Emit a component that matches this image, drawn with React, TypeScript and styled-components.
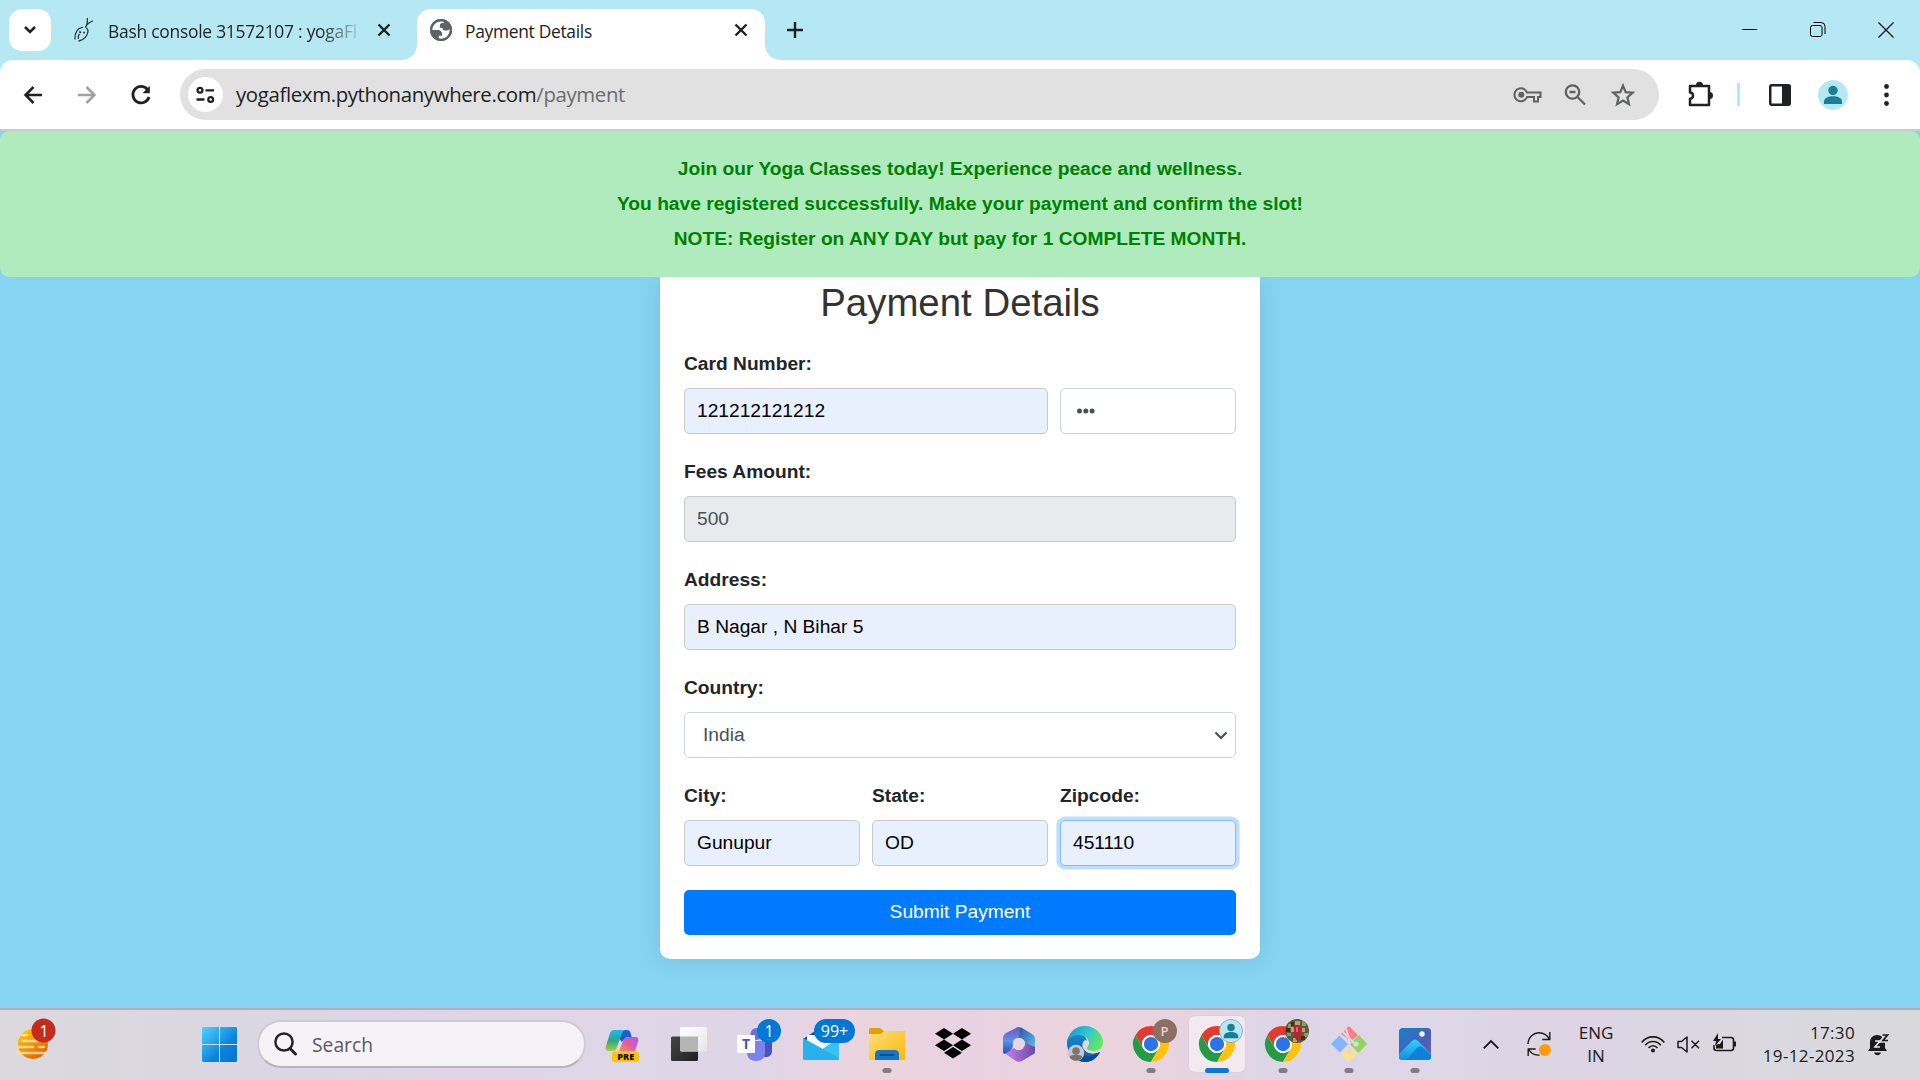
import React from "react";
import styled, { createGlobalStyle, css } from "styled-components";

const GlobalStyle = createGlobalStyle`
  * { box-sizing: border-box; }
  body { margin: 0; overflow: hidden; }
  svg { display: block; overflow: visible; flex: none; }
`;

const uiFont = `"Open Sans", "Noto Sans", sans-serif`;
const pageFont = `"Liberation Sans", Arial, sans-serif`;

const Screen = styled.div`
  width: 1920px;
  height: 1080px;
  display: flex;
  flex-direction: column;
  background: #b6e8f3;
  overflow: hidden;
`;

/* ---------- browser chrome ---------- */

const TabStrip = styled.header`
  height: 60px;
  display: flex;
  padding: 9px 0 0 9px;
  font-family: ${uiFont};
  color: #1f2123;
`;

const TabSearch = styled.button`
  width: 42px;
  height: 42px;
  border: 0;
  padding: 0;
  border-radius: 13px;
  background: #fff;
  display: grid;
  place-items: center;
`;

const Tab = styled.div<{ $active?: boolean }>`
  position: relative;
  height: 51px;
  display: flex;
  align-items: center;
  padding-bottom: 9px;
  ${(p) =>
    p.$active
      ? css`
          width: 348px;
          padding-left: 13px;
          padding-right: 18px;
          background: #fff;
          border-radius: 14px 14px 0 0;
          &::before,
          &::after {
            content: "";
            position: absolute;
            bottom: 0;
            width: 15px;
            height: 15px;
          }
          &::before {
            left: -15px;
            background: radial-gradient(circle at 0 0, transparent 14.5px, #fff 15.2px);
          }
          &::after {
            right: -15px;
            background: radial-gradient(circle at 100% 0, transparent 14.5px, #fff 15.2px);
          }
        `
      : css`
          width: 366px;
          padding-left: 23px;
          padding-right: 27px;
        `}
`;

const TabTitle = styled.span<{ $fade?: boolean; $left: number; $track: number }>`
  flex: 1;
  margin-left: ${(p) => p.$left}px;
  margin-right: 18px;
  overflow: hidden;
  white-space: nowrap;
  font-size: 17.4px;
  line-height: 26px;
  padding-top: 2px;
  letter-spacing: ${(p) => p.$track}px;
  ${(p) => p.$fade && `-webkit-mask-image: linear-gradient(90deg, #000 84%, rgba(0,0,0,.1)); mask-image: linear-gradient(90deg, #000 84%, rgba(0,0,0,.1));`}
`;

const NewTab = styled.div`
  width: 61px;
  padding: 13px 0 0 22px;
`;

const WindowButtons = styled.div`
  margin-left: auto;
  display: flex;
  gap: 52px;
  padding: 13px 26px 0 0;
`;

const Toolbar = styled.nav`
  height: 71px;
  background: #fff;
  border-bottom: 2px solid #cbcbcd;
  border-radius: 13px 13px 0 0;
  display: flex;
  align-items: center;
  padding: 0 18px 0 21px;
  font-family: ${uiFont};
`;

const NavButtons = styled.div`
  width: 159px;
  display: flex;
  gap: 30px;
`;

const Omnibox = styled.div`
  width: 1479px;
  height: 51px;
  border-radius: 26px;
  background: #e1e1e1;
  display: flex;
  align-items: center;
  padding: 0 23px 0 8px;
`;

const SiteInfo = styled.span`
  width: 35px;
  height: 35px;
  border-radius: 50%;
  background: #fff;
  display: grid;
  place-items: center;
`;

const Url = styled.span`
  flex: 1;
  margin: -2px 0 0 13px;
  font-size: 20.4px;
  line-height: 30px;
  letter-spacing: -0.36px;
  color: #202124;
  span { color: #6b6c6f; }
`;

const OmniActions = styled.div`
  display: flex;
  align-items: center;
  gap: 20px;
`;

const ToolbarActions = styled.div`
  margin-left: auto;
  display: flex;
  align-items: center;
  padding-right: 13px;
`;

const Divider = styled.i`
  width: 3px;
  height: 23px;
  margin: 0 29px 0 24px;
  background: #b6e8f3;
`;

const Avatar = styled.span`
  width: 30px;
  height: 30px;
  margin: 0 36px 0 27px;
`;

/* ---------- page ---------- */

const Page = styled.main`
  height: 877px;
  background: #86d4f2;
  font-family: ${pageFont};
  font-size: 19.2px;
  line-height: 28.8px;
  color: #212529;
  display: flex;
  flex-direction: column;
  align-items: center;
`;

const Banner = styled.div`
  position: relative;
  z-index: 1;
  width: 100%;
  height: 146px;
  padding-top: 20px;
  border-radius: 9px;
  background: #afebbc;
  color: #008000;
  font-weight: 700;
  text-align: center;
  line-height: 35px;
  p { margin: 0; }
`;

const Card = styled.form`
  width: 600px;
  height: 682px;
  padding: 3px 24px 24px;
  background: #fff;
  border-radius: 0 0 10px 10px;
  box-shadow: 0 0 24px rgba(0, 0, 0, 0.1);
  display: flex;
  flex-direction: column;
`;

const Title = styled.h2`
  margin: 0 0 23.6px;
  font-size: 38.4px;
  line-height: 46px;
  font-weight: 400;
  color: #333;
  text-align: center;
`;

const Row = styled.div<{ $columns: string }>`
  display: grid;
  grid-template-columns: ${(p) => p.$columns};
  column-gap: 12px;
  align-items: end;
  height: 84px;
  margin-bottom: 24px;
`;

const Field = styled.div`
  display: flex;
  flex-direction: column;
  gap: 9.6px;
`;

const Label = styled.label`
  font-weight: 700;
  height: 28.8px;
  line-height: 27.6px;
`;

const Control = styled.div<{ $kind?: "auto" | "plain" | "disabled"; $focus?: boolean; $pad?: number; $drop?: number }>`
  height: 45.6px;
  display: flex;
  align-items: center;
  justify-content: space-between;
  padding: ${(p) => p.$drop ?? 1.6}px 7px 0 ${(p) => p.$pad ?? 12}px;
  border-radius: 5px;
  border: 1px solid ${(p) => (p.$focus ? "#80bdff" : p.$kind === "plain" ? "#ced4da" : "#c8cacc")};
  background: ${(p) => (p.$kind === "plain" ? "#fff" : p.$kind === "disabled" ? "#e8ebed" : "#e8f0fe")};
  color: ${(p) => (p.$kind === "plain" || p.$kind === "disabled" ? "#495057" : "#000")};
  ${(p) => p.$focus && "box-shadow: 0 0 0 3.6px #bfdeff;"}
`;

const Submit = styled.button`
  height: 45.6px;
  border: 0;
  padding: 0;
  border-radius: 5px;
  background: #007bff;
  color: #fff;
  font: 400 19.2px/28.8px ${pageFont};
`;

/* ---------- taskbar ---------- */

const Taskbar = styled.footer`
  height: 72px;
  border-top: 2px solid #b3adb9;
  padding-bottom: 2px;
  display: flex;
  align-items: center;
  background: linear-gradient(90deg, #dbd9dd 0, #dad7e2 220px, #dfd5e6 440px, #ded6e6 760px, #e8d3e3 820px, #ead5dc 880px, #e8d1e2 970px, #ead5dc 1080px, #e7d3e0 1190px, #ded6e6 1260px, #ded7e6 1440px, #ddd4e4 1560px, #dad8e1 1760px, #d9d9db 1920px);
  font-family: ${uiFont};
  color: #1b1b1b;
`;

const Widget = styled.div`
  width: 202px;
  padding: 0 0 11px 15px;
`;

const SearchBox = styled.div`
  width: 329px;
  height: 48px;
  margin-left: 20px;
  margin-right: 4px;
  padding-left: 15px;
  border: 2px solid #cfcad8;
  border-bottom-color: #b6b2be;
  border-radius: 24px;
  background: #f5f3f8;
  display: flex;
  align-items: center;
  gap: 15px;
  font-size: 19.3px;
  letter-spacing: 0;
  color: #5b5a5e;
`;

const Apps = styled.div`
  display: flex;
`;

const AppSlot = styled.div<{ $active?: boolean }>`
  position: relative;
  width: 56px;
  height: 56px;
  margin: 0 5px;
  border-radius: 6px;
  display: grid;
  place-items: center;
  ${(p) => p.$active && "background: #f2e9f1; box-shadow: 0 0 0 1px #ddd0dd;"}
`;

const RunMark = styled.i<{ $active?: boolean }>`
  position: absolute;
  bottom: -1px;
  left: 50%;
  transform: translateX(-50%);
  width: ${(p) => (p.$active ? 24 : 9)}px;
  height: 5px;
  border-radius: 3px;
  background: ${(p) => (p.$active ? "#0b78d4" : "#837b84")};
`;

const Count = styled.span<{ $left: number; $width: number }>`
  position: absolute;
  top: 3px;
  left: ${(p) => p.$left}px;
  width: ${(p) => p.$width}px;
  height: 24px;
  border-radius: 12px;
  background: #0078d4;
  color: #fff;
  font-size: 16px;
  line-height: 24px;
  text-align: center;
`;

const ProfileBadge = styled.span`
  position: absolute;
  top: 3px;
  left: 30px;
  width: 24px;
  height: 24px;
`;

const Tray = styled.div`
  margin-left: auto;
  height: 100%;
  display: flex;
  align-items: center;
  padding-right: 30px;
`;

const TrayItem = styled.div<{ $gap: number; $lift?: number }>`
  margin-right: ${(p) => p.$gap}px;
  padding-bottom: ${(p) => p.$lift ?? 0}px;
`;

const Stack = styled.div<{ $align: string; $width: number; $gap: number; $size: number; $track?: number }>`
  width: ${(p) => p.$width}px;
  margin-right: ${(p) => p.$gap}px;
  font-size: ${(p) => p.$size}px;
  line-height: 23.5px;
  letter-spacing: ${(p) => p.$track ?? 0}px;
  text-align: ${(p) => p.$align};
  white-space: nowrap;
`;

/* ---------- drawings ---------- */

const Cross = ({ size = 12, w = 2.4 }: { size?: number; w?: number }) => (
  <svg width={size} height={size} viewBox="0 0 12 12" stroke="#1f2123" strokeWidth={w} fill="none">
    <path d="M.5.5l11 11M11.5.5l-11 11" />
  </svg>
);

const SnakeIcon = () => (
  <svg width="20" height="24" viewBox="0 0 20 24" fill="none" stroke="#27383c" strokeWidth="1.3" strokeLinecap="round">
    <path d="M1 21C.8 14.500 3.500 10 8.500 9.300" />
    <path d="M5 23c4.500-.8 8.500-5 9-9.500.1-1.500-.4-2.800-1.500-3.500M11.500 9c2-2 2-5 1.800-8.500M12.500 7.500c1.500-2.500 3.500-3.300 6-4.500" />
    <path d="M4.300 20.500c-.2-1.800 0-3.200.9-4.200" />
    <path d="M6 14l.3.3M10 14.300l.1.400" strokeWidth="1.800" />
  </svg>
);

const Globe = () => (
  <svg width="22" height="22" viewBox="2 2 20 20">
    <path fill="#5f6368" d="M12 2C6.480 2 2 6.480 2 12s4.480 10 10 10 10-4.480 10-10S17.520 2 12 2z" />
    <path fill="#fff" d="M4 12h4.400c3.400.02 4.940 1.730 4.600 5.130H10v2.600c3.500 1 7-.2 9-3.600 1-2 1.200-3.500.9-5.300C19.300 12 18 12.500 16.500 12.500c-1.900 0-3-.7-3.300-2.300L11 10V7.800c0-1.200.7-2 2-2.100h1.700l-.3-1.500C9.500 3.100 4.300 6 4 12z" />
    <path fill="none" stroke="#5f6368" strokeWidth="2" d="M12 3a9 9 0 1 0 0 18 9 9 0 1 0 0-18z" />
  </svg>
);

const Person = ({ size, bg = "#b6e8f3", fg = "#187f98", ring }: { size: number; bg?: string; fg?: string; ring?: string }) => (
  <svg width={size} height={size} viewBox="0 0 30 30">
    <circle cx="15" cy="15" r="14.500" fill={bg} stroke={ring ?? bg} />
    <circle cx="15" cy="10.500" r="4.700" fill={fg} />
    <path fill={fg} d="M6 24v-2.500c0-4 5-5.300 9-5.300s9 1.300 9 5.300V24z" />
  </svg>
);

const ChromeLogo = () => (
  <svg width="36" height="36" viewBox="0 0 48 48">
    <circle cx="24" cy="24" r="24" fill="#fff" />
    <path fill="#e33b2e" d="M3.215 12A24 24 0 0 1 44.785 12H24A12 12 0 0 0 13.608 30z" />
    <path fill="#259b48" d="M3.215 12A24 24 0 0 0 24 48L34.392 30A12 12 0 0 1 13.608 30z" />
    <path fill="#fcc20f" d="M44.785 12A24 24 0 0 1 24 48L34.392 30A12 12 0 0 0 24 12z" />
    <circle cx="24" cy="24" r="12" fill="#fff" />
    <circle cx="24" cy="24" r="9.500" fill="#2b74e8" />
  </svg>
);

const WeatherIcon = () => (
  <svg width="41" height="41" viewBox="0 0 41 41">
    <defs>
      <linearGradient id="sun" x1="0" y1="0" x2=".7" y2="1">
        <stop offset="0" stopColor="#ffd500" />
        <stop offset=".5" stopColor="#f89a08" />
        <stop offset="1" stopColor="#e85a00" />
      </linearGradient>
    </defs>
    <circle cx="18" cy="26" r="15" fill="url(#sun)" />
    <path d="M7 17h5M7.500 23h16M1 29h17M24 29h5M1 35h30" stroke="#f3dfa3" strokeWidth="2.500" strokeLinecap="round" opacity=".9" />
    <circle cx="28.500" cy="12.500" r="12" fill="#c42b1c" />
    <text x="29" y="18.500" fill="#fff" fontFamily="Open Sans" fontSize="16" textAnchor="middle">1</text>
  </svg>
);

const WindowsLogo = () => (
  <svg width="35" height="35" viewBox="0 0 35 35">
    <defs>
      <linearGradient id="win" x1="0" y1="0" x2="35" y2="35" gradientUnits="userSpaceOnUse">
        <stop offset="0" stopColor="#4fd4ff" />
        <stop offset=".6" stopColor="#0c84dc" />
        <stop offset="1" stopColor="#0074d1" />
      </linearGradient>
    </defs>
    <path fill="url(#win)" d="M1 0h16v17H0V1zM18 0h16l1 1v16H18zM0 18h17v17H1l-1-1zM18 18h17v16l-1 1H18z" />
  </svg>
);

const CopilotIcon = () => (
  <svg width="36" height="36" viewBox="0 0 36 36">
    <defs>
      <linearGradient id="cpA" x1="0" y1="0" x2="0" y2="1">
        <stop offset="0" stopColor="#21b8ee" />
        <stop offset=".5" stopColor="#2fa58d" />
        <stop offset="1" stopColor="#b1c93c" />
      </linearGradient>
      <linearGradient id="cpB" x1="1" y1="0" x2="0" y2="1">
        <stop offset="0" stopColor="#a35cf0" />
        <stop offset=".5" stopColor="#e45aa4" />
        <stop offset="1" stopColor="#f79054" />
      </linearGradient>
    </defs>
    <path fill="#1561d6" d="M9 4h13c2 0 3 1 3.600 3l1 4h-5l-5 5z" />
    <path fill="url(#cpA)" d="M9 4h11c-2 1-3 3-4 6l-4 11c-1 3-2 4-5 4H4c-3 0-4-2-3-5L5 7c1-2 2-3 4-3z" />
    <path fill="url(#cpB)" d="M25 11h5c3 0 4 2 3 5l-3 9H14l4-10c1-3 3-4 7-4z" />
    <rect x="7" y="25.500" width="27" height="10.500" rx="2.500" fill="#ffc408" />
    <text x="20.700" y="34" textAnchor="middle" fontFamily="Open Sans" fontWeight="800" fontSize="9.200" fill="#1b1500">PRE</text>
  </svg>
);

const TaskViewIcon = () => (
  <svg width="36" height="36" viewBox="0 0 36 36">
    <defs>
      <linearGradient id="tvD" x1="0" y1="0" x2="1" y2="1"><stop stopColor="#454545" /><stop offset="1" stopColor="#202020" /></linearGradient>
      <linearGradient id="tvL" x1="0" y1="0" x2="1" y2="1"><stop stopColor="#fff" /><stop offset="1" stopColor="#e7e7e7" /></linearGradient>
    </defs>
    <rect x="0" y="10.500" width="27" height="24.500" rx="1.500" fill="url(#tvD)" />
    <rect x="9" y="1" width="27" height="24.500" rx="1.500" fill="url(#tvL)" />
    <path d="M9 10.500h18v15H10l-1-1z" fill="#b4b4b4" />
  </svg>
);

const TeamsIcon = () => (
  <svg width="36" height="36" viewBox="0 0 36 36">
    <circle cx="19.500" cy="8" r="6" fill="#6a70d8" />
    <path fill="#4a53bd" d="M25 15h10v10c0 4-3 6-6 6h-4z" />
    <path fill="#7b83eb" d="M10 15h18v12c0 5-4 8-9 8s-9-3-9-8z" />
    <rect x="0" y="9" width="18" height="18" rx="1" fill="#fff" />
    <text x="9" y="23" textAnchor="middle" fontFamily="Open Sans" fontWeight="700" fontSize="14" fill="#4b53bc">T</text>
  </svg>
);

const MailIcon = () => (
  <svg width="36" height="36" viewBox="0 0 36 36">
    <path fill="#0c59a4" d="M0 13L18 1l18 12-18 15z" />
    <path fill="#f4f6f8" d="M4 9h29v11l-15 9L4 18z" />
    <path fill="#1c9fe5" d="M36 12v22H4z" />
    <path fill="#37c3f1" d="M36 12v22L17 25z" />
    <path fill="#29b1ea" d="M0 12l36 20c0 2-1 2-2 2H1l-1-1z" />
  </svg>
);

const FolderIcon = () => (
  <svg width="36" height="36" viewBox="0 0 36 36">
    <defs><linearGradient id="fold" x1="0" y1="0" x2="1" y2="1"><stop stopColor="#ffdf79" /><stop offset="1" stopColor="#f8b90a" /></linearGradient></defs>
    <path fill="#e0a008" d="M0 3l1-1h10l4 3v5H0z" />
    <path fill="url(#fold)" d="M0 8h12l3-3h21v29H1l-1-1z" />
    <path fill="#1277cc" d="M6 34v-6c0-3 2-4 4-4h16c2 0 4 1 4 4v6z" />
    <path stroke="#0b4a8c" strokeWidth="2" strokeLinecap="round" d="M11.500 29h13" />
  </svg>
);

const DropboxIcon = () => (
  <svg width="36" height="36" viewBox="0 0 36 36">
    <path d="M9 2l9 5.800-9 5.700-9-5.700zM27 2l9 5.800-9 5.700-9-5.700zM9 13.500l9 5.700L9 25l-9-5.800zM27 13.500l9 5.700-9 5.800-9-5.800zM18 21l9 5.700-9 5.800-9-5.800z" fill="#000" />
  </svg>
);

const Office365Icon = () => (
  <svg width="34" height="36" viewBox="0 0 34 36">
    <defs>
      <linearGradient id="ofA" x1="0" y1="0" x2="0" y2="1"><stop stopColor="#7454c6" /><stop offset=".5" stopColor="#5a91eb" /><stop offset="1" stopColor="#1d56ae" /></linearGradient>
      <linearGradient id="ofB" x1="0" y1="0" x2="1" y2="1"><stop stopColor="#244aa4" /><stop offset="1" stopColor="#65cdf0" /></linearGradient>
      <linearGradient id="ofC" x1="0" y1="0" x2="1" y2="0"><stop stopColor="#c884ed" /><stop offset="1" stopColor="#6b4aa4" /></linearGradient>
    </defs>
    <path fill="url(#ofB)" d="M14 2c2-1 4-1 6 0l10 6c2 1 3 3 3 5v15L23 18c0-4-3-6-6-6z" />
    <path fill="url(#ofC)" d="M2 27l10-5c3 3 7 3 9-1l2-4 10 4v4c0 2-1 3-3 4l-10 6c-2 1-4 1-6 0z" />
    <path fill="url(#ofA)" d="M18 1l-1 11c-4 0-7 3-6 7 0 4-4 7-9 9-1-1-1-2-1-4V12c0-2 1-4 3-5l10-5z" />
    <circle cx="17" cy="18" r="6" fill="#e8d6e2" />
  </svg>
);

const EdgeIcon = () => (
  <svg width="36" height="36" viewBox="0 0 36 36">
    <defs>
      <linearGradient id="egA" x1="0" y1=".2" x2="1" y2=".6"><stop stopColor="#1595d8" /><stop offset=".5" stopColor="#30c5d1" /><stop offset="1" stopColor="#66eb57" /></linearGradient>
      <linearGradient id="egB" x1="0" y1="0" x2="0" y2="1"><stop stopColor="#168ace" /><stop offset="1" stopColor="#0f58a9" /></linearGradient>
    </defs>
    <path fill="url(#egB)" d="M0 17C0 10 5 7 10 8c6 0 10 3 10 8 0 3-2 4-2 6 0 5 6 7 15 4-3 6-8 10-15 10C8 36 0 28 0 17z" />
    <path fill="url(#egA)" d="M0 17C1 7 8 0 18 0s18 8 18 16c0 6-4 9-9 9-4 0-7-1-7-3 0-1 2-2 2-5 0-5-5-8-10-8C6 9 1 12 0 17z" />
    <path fill="#0f4b94" d="M12 20c0 8 6 11 12 10 4-1 7-3 9-4-3 6-8 10-15 10-6 0-10-8-6-16z" />
    <path fill="#ead5dc" d="M18 14c-3 3-3 6-2 8 3 6 12 7 17 3 1-1 0-2-1-1-5 2-13 1-13-2 0-1 2-2 2-5 0-2-2-3-3-3z" />
    <circle cx="9" cy="27" r="8.200" fill="#cac7c6" />
    <circle cx="9" cy="25" r="3.800" fill="#777473" />
    <path fill="#777473" d="M2.500 31c1-3 12-3 13 0-3 5-10 5-13 0z" />
  </svg>
);

const GitIcon = () => (
  <svg width="36" height="36" viewBox="0 0 36 36">
    <path fill="#ff817f" d="M18 0l8 8c1 1 0 2-1 3l-7 6-2-5-6-4z" />
    <path fill="#84b5fb" d="M8.500 9.500L17 18l-8 8.500L0 18z" />
    <path fill="#91d55c" d="M28 9l8 9-8.500 9L19 18z" />
    <path fill="#fde482" d="M18 20l8 7.500L18 36l-8.500-8.500z" />
    <path stroke="#dfd7e6" strokeWidth="2" fill="none" d="M11 5l14 14M18 12v15M18 12l-3-9" />
    <circle cx="25" cy="18" r="2.600" fill="#dfd7e6" />
    <circle cx="18" cy="25" r="2.800" fill="#dfd7e6" />
  </svg>
);

const PhotosIcon = () => (
  <svg width="32" height="32" viewBox="0 0 32 32">
    <defs>
      <linearGradient id="phA" x1="0" y1="0" x2="1" y2="1"><stop stopColor="#1481cf" /><stop offset=".6" stopColor="#4c60b5" /><stop offset="1" stopColor="#7c58ad" /></linearGradient>
      <linearGradient id="phB" x1=".5" y1="0" x2=".5" y2="1"><stop stopColor="#35d2fa" /><stop offset="1" stopColor="#128ee0" /></linearGradient>
      <clipPath id="phC"><rect width="32" height="32" rx="3.500" /></clipPath>
    </defs>
    <g clipPath="url(#phC)">
      <rect width="32" height="32" fill="url(#phA)" />
      <path fill="url(#phB)" d="M0 26l13-13c2-2 4-2 6 0l13 13v6H0z" />
      <path fill="#0a83dd" d="M7 32l11-12c2-2 4-2 5-1l9 8v5z" />
    </g>
    <circle cx="23" cy="6" r="2.700" fill="#f2f0f5" />
  </svg>
);

const LetterBadge = () => (
  <svg width="24" height="24" viewBox="0 0 24 24">
    <circle cx="12" cy="12" r="12" fill="#8c6f65" />
    <text x="11.500" y="16.500" textAnchor="middle" fontFamily="Open Sans" fontWeight="600" fontSize="13" fill="#e6d9d4">P</text>
  </svg>
);

const PhotoBadge = () => (
  <svg width="24" height="24" viewBox="0 0 24 24">
    <defs><clipPath id="pb"><circle cx="12" cy="12" r="12" /></clipPath></defs>
    <g clipPath="url(#pb)">
      <rect width="24" height="24" fill="#5c5b3c" />
      <path fill="#8a9a5c" d="M3 5h3v4H3zM17 2h4v5h-4zM19 14h5v4h-5zM2 14h4v3H2z" />
      <path fill="#c09a76" d="M10 2h5v5h-5zM6 8h3v5H6zM17 9h3v4h-3zM8 19h4v4H8z" />
      <path fill="#343422" d="M6 3h3v4H6zM16 17h4v4h-4zM1 9h4v4H1z" />
      <path fill="#b4262f" d="M9 6h6l2 9-2 6h-4l-2-6z" />
      <path fill="#d86a62" d="M11 8h2v5h-2z" />
    </g>
  </svg>
);

const arrow = { fill: "none", stroke: "#202124", strokeWidth: 2.5 } as const;

export default function App() {
  return (
    <Screen>
      <GlobalStyle />
      <TabStrip>
        <TabSearch>
          <svg width="12" height="8" viewBox="0 0 12 8" {...arrow} strokeWidth={2.6}><path d="M1 1l5 5 5-5" /></svg>
        </TabSearch>
        <Tab>
          <SnakeIcon />
          <TabTitle $left={14} $track={-0.24} $fade>Bash console 31572107 : yogaFl</TabTitle>
          <Cross />
        </Tab>
        <Tab $active>
          <Globe />
          <TabTitle $left={13} $track={-0.3}>Payment Details</TabTitle>
          <Cross />
        </Tab>
        <NewTab>
          <svg width="16" height="16" viewBox="0 0 16 16" {...arrow} strokeWidth={2.4}><path d="M8 0v16M0 8h16" /></svg>
        </NewTab>
        <WindowButtons>
          <svg width="16" height="16" viewBox="0 0 16 16" stroke="#000" fill="none"><path d="M0 7.500h15" /></svg>
          <svg width="16" height="16" viewBox="0 0 16 16" stroke="#000" fill="none"><rect x=".5" y="3.500" width="11.500" height="11" rx="2" /><path d="M3.500.5h7.500a4 4 0 0 1 4 4v7.500" /></svg>
          <svg width="16" height="16" viewBox="0 0 16 16" stroke="#000" fill="none" strokeWidth="1.100"><path d="M.5.5l15 15M15.500.5l-15 15" /></svg>
        </WindowButtons>
      </TabStrip>

      <Toolbar>
        <NavButtons>
          <svg width="24" height="24" viewBox="0 0 24 24" {...arrow}><path d="M21 12H4.500M12.500 4l-8 8 8 8" /></svg>
          <svg width="24" height="24" viewBox="0 0 24 24" {...arrow} stroke="#a1a1a2"><path d="M3 12h16.500M11.500 4l8 8-8 8" /></svg>
          <svg width="24" height="24" viewBox="0 0 24 24" {...arrow} strokeWidth={2.8}><path d="M18.500 6.500A8.200 8.200 0 1 0 20 14" /><path d="M20.800 3v7.300h-7.300z" fill="#202124" stroke="none" /></svg>
        </NavButtons>
        <Omnibox>
          <SiteInfo>
            <svg width="19" height="16" viewBox="0 0 19 16" {...arrow} strokeWidth={2.3}><circle cx="4" cy="3.300" r="2.400" /><path d="M9.500 3.300H18M.5 12.500h8" /><circle cx="14.700" cy="12.500" r="2.400" /></svg>
          </SiteInfo>
          <Url>yogaflexm.pythonanywhere.com<span>/payment</span></Url>
          <OmniActions>
            <svg width="28" height="18" viewBox="0 0 28 18" fill="none" stroke="#5f6163" strokeWidth="2"><path d="M13 6.500h13.500V11H24v4.500h-4V11h-7A6.500 6.500 0 1 1 13 6.500z" /><circle cx="7.300" cy="8.800" r="3" fill="#5f6163" stroke="none" /></svg>
            <svg width="28" height="24" viewBox="0 0 28 24" fill="none" stroke="#5f6163" strokeWidth="2.300"><circle cx="10.500" cy="9" r="6.700" /><path d="M15.500 14l7.500 7.500M7.500 9h6" /></svg>
            <svg width="26" height="24" viewBox="0 0 26 24" fill="none" stroke="#5f6163" strokeWidth="2.200"><path d="M13 2.600l2.700 6.500 7 .6-5.300 4.600 1.600 6.900-6-3.700-6 3.700 1.600-6.900-5.300-4.600 7-.6z" /></svg>
          </OmniActions>
        </Omnibox>
        <ToolbarActions>
          <svg width="26" height="26" viewBox="0 0 26 26" {...arrow}><path d="M3 4h19v19H3v-6.300c4 0 4-6.300 0-6.300z" strokeLinejoin="round" /><path d="M9 3.300a3.500 3.500 0 0 1 7 0zM22.500 10a3.500 3.500 0 0 1 0 7z" fill="#202124" stroke="none" /></svg>
          <Divider />
          <svg width="22" height="22" viewBox="0 0 22 22" {...arrow}><rect x="1.250" y="1.250" width="19.500" height="19.500" rx="1.500" /><path d="M13 1h8v20h-8z" fill="#202124" stroke="none" /></svg>
          <Avatar><Person size={30} /></Avatar>
          <svg width="5" height="22" viewBox="0 0 5 22" fill="#202124"><circle cx="2.500" cy="2.500" r="2.400" /><circle cx="2.500" cy="11" r="2.400" /><circle cx="2.500" cy="19.500" r="2.400" /></svg>
        </ToolbarActions>
      </Toolbar>

      <Page>
        <Banner>
          <p>Join our Yoga Classes today! Experience peace and wellness.</p>
          <p>You have registered successfully. Make your payment and confirm the slot!</p>
          <p>NOTE: Register on ANY DAY but pay for 1 COMPLETE MONTH.</p>
        </Banner>
        <Card>
          <Title>Payment Details</Title>
          <Row $columns="364px 176px">
            <Field><Label>Card Number:</Label><Control>121212121212</Control></Field>
            <Control $kind="plain" $pad={15} $drop={0}>
              <svg width="20" height="6" viewBox="0 0 20 6" fill="#495057"><circle cx="3.500" cy="3" r="2.500" /><circle cx="9.800" cy="3" r="2.500" /><circle cx="16.100" cy="3" r="2.500" /></svg>
            </Control>
          </Row>
          <Row $columns="1fr"><Field><Label>Fees Amount:</Label><Control $kind="disabled">500</Control></Field></Row>
          <Row $columns="1fr"><Field><Label>Address:</Label><Control>B Nagar , N Bihar 5</Control></Field></Row>
          <Row $columns="1fr">
            <Field>
              <Label>Country:</Label>
              <Control $kind="plain" $pad={18} $drop={2}>
                India
                <svg width="14" height="9" viewBox="0 0 14 9" fill="none" stroke="#495057" strokeWidth="2.200"><path d="M1.500 1.500L7 7l5.500-5.500" /></svg>
              </Control>
            </Field>
          </Row>
          <Row $columns="repeat(3, 1fr)">
            <Field><Label>City:</Label><Control>Gunupur</Control></Field>
            <Field><Label>State:</Label><Control>OD</Control></Field>
            <Field><Label>Zipcode:</Label><Control $focus>451110</Control></Field>
          </Row>
          <Submit type="button">Submit Payment</Submit>
        </Card>
      </Page>

      <Taskbar>
        <Widget><WeatherIcon /></Widget>
        <WindowsLogo />
        <SearchBox>
          <svg width="23" height="24" viewBox="0 0 23 24" fill="none" stroke="#242426" strokeWidth="2.500" strokeLinecap="round"><circle cx="10" cy="10" r="8.600" /><path d="M16 16.500l5.500 5.500" strokeWidth="3" /></svg>
          Search
        </SearchBox>
        <Apps>
          <AppSlot><CopilotIcon /></AppSlot>
          <AppSlot><TaskViewIcon /></AppSlot>
          <AppSlot><TeamsIcon /><Count $left={30} $width={24}>1</Count></AppSlot>
          <AppSlot><MailIcon /><Count $left={21} $width={41}>99+</Count></AppSlot>
          <AppSlot><FolderIcon /><RunMark /></AppSlot>
          <AppSlot><DropboxIcon /></AppSlot>
          <AppSlot><Office365Icon /></AppSlot>
          <AppSlot><EdgeIcon /></AppSlot>
          <AppSlot><ChromeLogo /><ProfileBadge><LetterBadge /></ProfileBadge><RunMark /></AppSlot>
          <AppSlot $active><ChromeLogo /><ProfileBadge><Person size={24} ring="#8b9ea5" /></ProfileBadge><RunMark $active /></AppSlot>
          <AppSlot><ChromeLogo /><ProfileBadge><PhotoBadge /></ProfileBadge><RunMark /></AppSlot>
          <AppSlot><GitIcon /><RunMark /></AppSlot>
          <AppSlot><PhotosIcon /><RunMark /></AppSlot>
        </Apps>
        <Tray>
          <TrayItem $gap={28}>
            <svg width="16" height="9" viewBox="0 0 16 9" fill="none" stroke="#1b1b1b" strokeWidth="1.900"><path d="M.7 8.300L8 1l7.300 7.300" /></svg>
          </TrayItem>
          <TrayItem $gap={27}>
            <svg width="24" height="24" viewBox="0 0 24 24" fill="none" stroke="#1b1b1b" strokeWidth="1.400"><path d="M1 12C1 5 7 .8 12 .8c4 0 8 2 10.500 6.500M22.800 0v7.500h-7.500M1.200 24v-7h7.500M1.500 17c2 4 6 6.500 11 6" /><circle cx="18" cy="18" r="6" fill="#ff9b0a" stroke="none" /></svg>
          </TrayItem>
          <Stack $align="center" $width={36} $gap={27} $size={17} $track={-0.1}>ENG<br />IN</Stack>
          <TrayItem $gap={12}>
            <svg width="24" height="17" viewBox="0 0 24 17" fill="none" stroke="#1b1b1b" strokeWidth="1.600"><path d="M.7 6.500c6-7.500 16.600-7.500 22.600 0M4.200 9.300c4.200-5 11.400-5 15.600 0M7.500 12c2.600-3 6.400-3 9 0" /><circle cx="12" cy="14.600" r="2" fill="#1b1b1b" stroke="none" /></svg>
          </TrayItem>
          <TrayItem $gap={13}>
            <svg width="23" height="17" viewBox="0 0 23 17" fill="none" stroke="#1b1b1b" strokeWidth="1.500" strokeLinejoin="round"><path d="M1 5.500h3.500L10 1v15l-5.500-4.500H1zM14.500 4.800l7.500 7.500M22 4.800l-7.500 7.500" /></svg>
          </TrayItem>
          <TrayItem $gap={23} $lift={3}>
            <svg width="24" height="19" viewBox="0 0 24 19" fill="none" stroke="#1b1b1b" strokeWidth="1.600"><path d="M9 4.500h9c1.500 0 2.500 1 2.500 2.500v8c0 1.500-1 2.500-2.500 2.500H3.500C2 17.500 1 16.500 1 15v-3" /><path d="M21 8.500h2v5h-2zM3 15.500v-4l4-.5 3-4.500v9z" fill="#1b1b1b" stroke="none" /><path d="M5 0L0 8h3l-1 5 6-7H5z" fill="#1b1b1b" stroke="none" /></svg>
          </TrayItem>
          <Stack $align="right" $width={95} $gap={13} $size={17} $track={0.35}>17:30<br />19-12-2023</Stack>
          <svg width="22" height="23" viewBox="0 0 22 23">
            <path fill="#1b1b1b" d="M9 2c4 0 8 3 8 7v6l2 3H0l2-3V9c0-4 3-7 7-7zM6 19.500h7c-1 3.500-6 3.500-7 0z" />
            <path d="M14 2h5l-4.500 5.500h5" stroke="#dad8df" strokeWidth="4.500" fill="none" />
            <path d="M14.500 2h5l-4.500 5.500h5" stroke="#1b1b1b" strokeWidth="1.700" fill="none" />
            <path d="M7 8h5l-5 6h5" stroke="#e9e7ec" strokeWidth="1.600" fill="none" />
          </svg>
        </Tray>
      </Taskbar>
    </Screen>
  );
}
